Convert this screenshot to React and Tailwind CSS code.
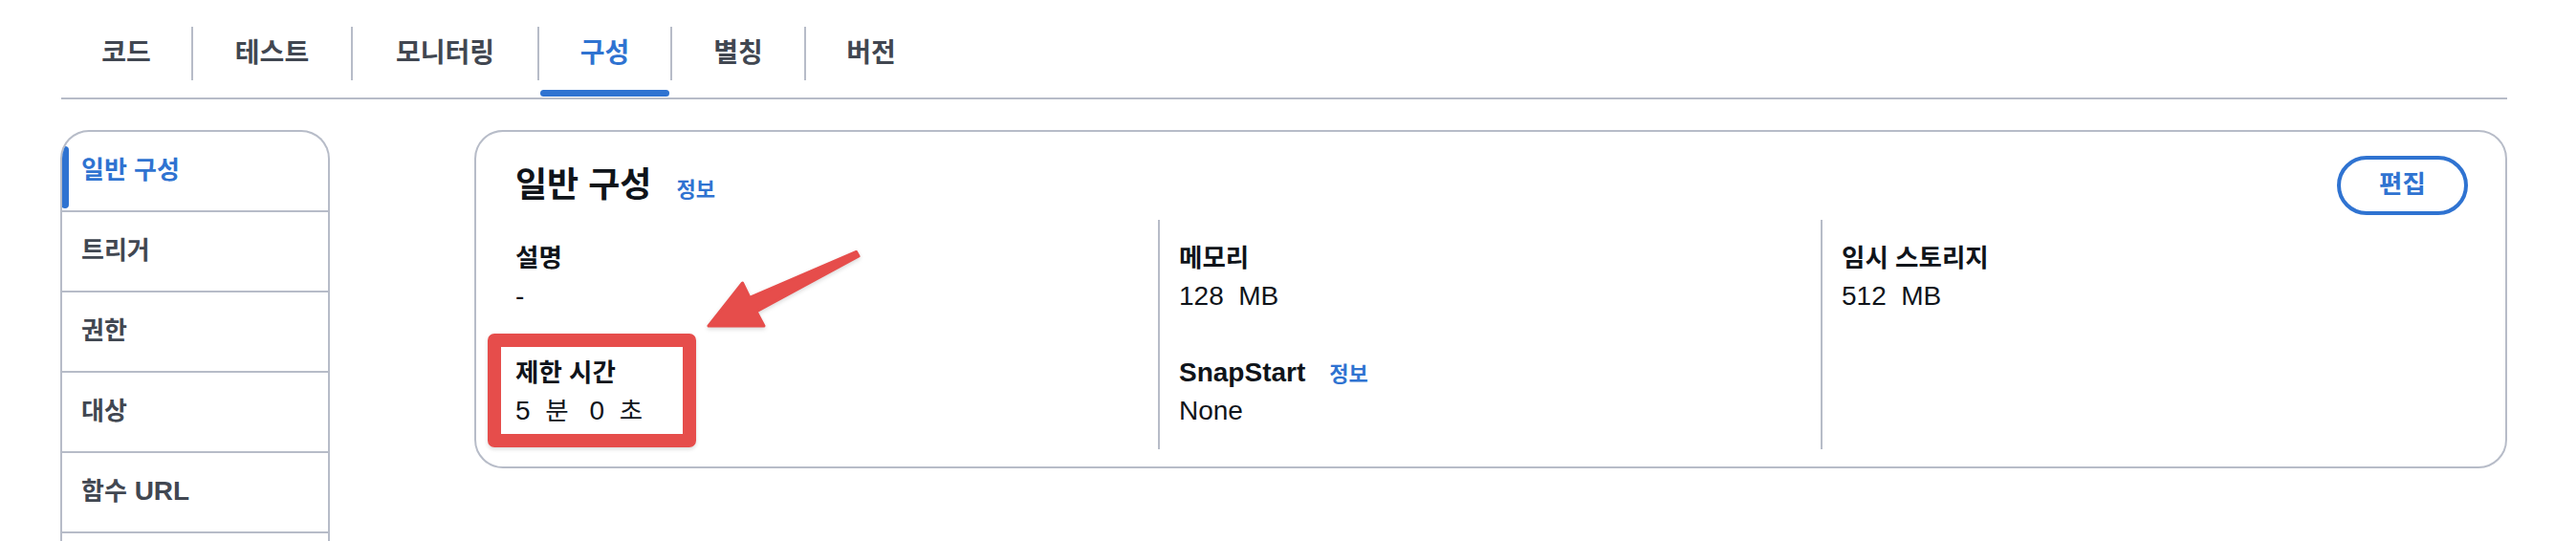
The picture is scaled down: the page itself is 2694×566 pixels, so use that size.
import React from 'react';

const BLUE = 'text-[#2f73d1]';

const tabs = [
  { label: '코드', w: 'w-[136px]' },
  { label: '테스트', w: 'w-[167px]' },
  { label: '모니터링', w: 'w-[195px]' },
  { label: '구성', w: 'w-[139px]', active: true },
  { label: '별칭', w: 'w-[140px]' },
  { label: '버전', w: 'w-[138px]' },
];

const sideItems = [
  { label: '일반 구성', active: true },
  { label: '트리거' },
  { label: '권한' },
  { label: '대상' },
  { label: '함수', latin: 'URL' },
  { label: '' },
];

// Korean runs are set a bit smaller than the latin text, as in the console
function K({ children }) {
  return <span className="text-[26.5px] leading-none">{children}</span>;
}

function Tabs() {
  return (
    <div>
      <div className="flex h-[102px] pl-[64px]">
        {tabs.map((t, i) => (
          <div key={t.label} className={`${t.w} flex flex-col`}>
            <div
              className={`mt-[28px] h-[56px] flex items-center justify-center ${
                i > 0 ? 'border-l-2 border-[#b7bcc8]' : ''
              }`}
            >
              <span className={`text-[28px] font-bold ${t.active ? BLUE : 'text-[#414751]'}`}>
                {t.label}
              </span>
            </div>
            {t.active && <div className="mt-[10px] ml-[3px] mr-[1px] h-[7px] rounded-[4px] bg-[#2f73d1]" />}
          </div>
        ))}
      </div>
      <div className="ml-[64px] w-[2558px] h-[2px] bg-[#b7bcc8]" />
    </div>
  );
}

function Sidebar() {
  return (
    <div className="w-[282px] h-[440px] border-2 border-b-0 border-[#b7bcc8] rounded-t-[30px] overflow-hidden">
      {sideItems.map((s, i) => (
        <div
          key={i}
          className="relative h-[84px] border-b-2 border-[#b7bcc8] flex items-center pl-[20px] pb-[2px]"
        >
          {s.active && (
            <div className="absolute left-[-1px] top-[15px] w-[8px] h-[65px] rounded-full bg-[#2f73d1]" />
          )}
          {s.label && (
            <span className={`font-bold text-[28px] ${s.active ? BLUE : 'text-[#414751]'}`}>
              <span className="text-[26px] leading-none">{s.label}</span>
              {s.latin && <span className="whitespace-pre"> {s.latin}</span>}
            </span>
          )}
        </div>
      ))}
    </div>
  );
}

function Field({ label, value, info, className = '' }) {
  return (
    <div className={className}>
      <div className="font-bold whitespace-nowrap">
        {label}
        {info && <span className={`ml-[25px] text-[22px] leading-none ${BLUE}`}>정보</span>}
      </div>
      <div className="whitespace-pre">{value}</div>
    </div>
  );
}

export default function App() {
  return (
    <div className="w-[2694px] h-[566px] overflow-hidden bg-white text-[#0f141a] font-['Liberation_Sans','Noto_Sans_CJK_KR',sans-serif]">
      <Tabs />

      <div className="flex pl-[63px] pt-[32px]">
        <Sidebar />

        {/* General configuration card */}
        <div className="relative ml-[151px] w-[2126px] h-[354px] border-2 border-[#b7bcc8] rounded-[30px] pt-[25px] pl-[41px] pr-[39px]">
          <div className="flex items-center justify-between h-[62px]">
            <div className="flex items-baseline">
              <span className="text-[36px] font-bold">일반 구성</span>
              <span className={`ml-[26px] text-[22px] font-bold ${BLUE}`}>정보</span>
            </div>
            <button className="w-[137px] h-[62px] rounded-full border-[4px] border-[#2f73d1] flex items-center justify-center">
              <span className={`text-[26.5px] font-bold ${BLUE}`}>편집</span>
            </button>
          </div>

          <div className="mt-[5px] grid grid-cols-[672px_693px_1fr] h-[240px] text-[28px] leading-[40px]">
            <div className="pt-[20px]">
              <Field label={<K>설명</K>} value="-" />
              <Field
                className="mt-[40px]"
                label={<K>제한 시간</K>}
                value={
                  <>
                    5  <K>분</K>
                    <span className="ml-[22px]">0</span>  <K>초</K>
                  </>
                }
              />
            </div>
            <div className="border-l-2 border-[#b7bcc8] pl-[20px] pt-[20px]">
              <Field label={<K>메모리</K>} value="128  MB" />
              <Field className="mt-[40px]" label="SnapStart" info value="None" />
            </div>
            <div className="border-l-2 border-[#b7bcc8] pl-[20px] pt-[20px]">
              <Field label={<K>임시 스토리지</K>} value="512  MB" />
            </div>
          </div>

          {/* annotation: red highlight box and arrow */}
          <div className="absolute left-[12px] top-[211px] w-[218px] h-[119px] border-[14px] border-[#e64d4b] rounded-[7px] shadow-[0_2px_4px_rgba(0,0,0,0.15)]" />
          <svg
            className="absolute left-[232px] top-[117px] drop-shadow-[0_2px_2px_rgba(0,0,0,0.15)]"
            width="180"
            height="100"
            viewBox="730 255 180 100"
          >
            <polygon
              points="741,341 799,341 791,326 898,268 895.5,263.5 784,311.5 776.5,296"
              fill="#e64d4b"
              stroke="#e64d4b"
              strokeWidth="3"
              strokeLinejoin="round"
            />
          </svg>
        </div>
      </div>
    </div>
  );
}
